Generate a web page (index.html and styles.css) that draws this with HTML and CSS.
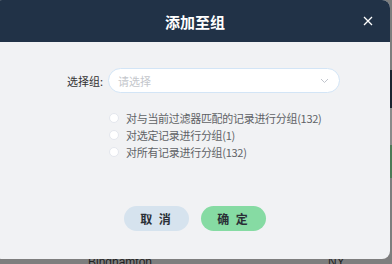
FILE: index.html
```html
<!DOCTYPE html>
<html>
<head>
<meta charset="utf-8">
<link rel="stylesheet" href="styles.css">
</head>
<body>
<div class="page">
  <div class="band band-top"></div>
  <div class="band band-dark"></div>
  <div class="band band-mid"></div>
  <div class="band band-green"></div>
  <div class="band band-rest"></div>
  <div class="row-text"><span class="city">Binghamton</span><span class="state">NY</span></div>
</div>
<div class="dialog">
  <div class="dialog-header">
    <span class="title">添加至组</span>
    <svg class="close" width="10" height="10" viewBox="0 0 10 10"><path d="M1 1L9 9M9 1L1 9" stroke="#fff" stroke-width="1.3" fill="none"/></svg>
  </div>
  <div class="dialog-body">
    <div class="field">
      <span class="label">选择组:</span>
      <div class="select">
        <span class="placeholder">请选择</span>
        <svg class="chev" width="9" height="6" viewBox="0 0 9 6"><path d="M1 1L4.5 4.5L8 1" stroke="#c0c4cc" stroke-width="1" fill="none"/></svg>
      </div>
    </div>
    <div class="options">
      <label class="opt"><span class="radio"></span>对与当前过滤器匹配的记录进行分组(132)</label>
      <label class="opt"><span class="radio"></span>对选定记录进行分组(1)</label>
      <label class="opt"><span class="radio"></span>对所有记录进行分组(132)</label>
    </div>
    <div class="actions">
      <button class="btn btn-cancel">取 消</button>
      <button class="btn btn-ok">确 定</button>
    </div>
  </div>
</div>
</body>
</html>
```
FILE: styles.css
```css
html, body {
  margin: 0;
  padding: 0;
  width: 392px;
  height: 264px;
  overflow: hidden;
  background: #7e7e7e;
  font-family: "Noto Sans CJK SC", "Noto Sans", sans-serif;
}
.page {
  display: flex;
  flex-direction: column;
  height: 264px;
}
.band { flex: none; }
.band-top { height: 70px; background: #7e7e7e; }
.band-dark { height: 38px; background: #1c2330; }
.band-mid { height: 37px; background: #8a8a8a; }
.band-green { height: 33px; background: #4d7a57; }
.band-rest { height: 77px; background: #7e7e7e; }
.row-text {
  height: 9px;
  display: flex;
  font-family: "Liberation Sans", sans-serif;
  font-size: 12px;
  line-height: 14px;
  color: #222;
}
.city { margin-left: 88px; }
.state { margin-left: 176px; }
.dialog {
  position: absolute;
  left: -6px;
  top: 0;
  width: 396px;
  height: 259px;
  border-radius: 8px;
  background: #f1f2f4;
  overflow: hidden;
  display: flex;
  flex-direction: column;
}
.dialog-header {
  height: 42px;
  background: #213247;
  display: flex;
  align-items: center;
  justify-content: center;
  position: relative;
  padding-left: 6px;
}
.title {
  color: #fff;
  font-size: 15px;
  font-weight: bold;
}
.close {
  position: absolute;
  right: 17px;
  top: 16px;
}
.dialog-body {
  display: flex;
  flex-direction: column;
  padding-top: 26px;
}
.field {
  display: flex;
  align-items: center;
  height: 25px;
}
.label {
  width: 109px;
  text-align: right;
  font-size: 11px;
  color: #333;
  margin-right: 5px;
}
.select {
  width: 230px;
  height: 23px;
  border: 1px solid #d3e5f6;
  border-radius: 13px;
  background: #fff;
  display: flex;
  align-items: center;
  justify-content: space-between;
  padding: 0 10px 0 9px;
  box-sizing: border-box;
  width: 232px;
  height: 25px;
}
.placeholder {
  font-size: 11px;
  color: #c4c7cc;
}
.options {
  display: flex;
  flex-direction: column;
  margin-top: 16px;
  margin-left: 115px;
  gap: 0;
}
.opt {
  display: flex;
  align-items: center;
  height: 17px;
  font-size: 11px;
  color: #606266;
  letter-spacing: -0.3px;
}
.radio {
  width: 10px;
  height: 10px;
  border-radius: 50%;
  border: 1px solid #e4e7ed;
  background: #fff;
  margin-right: 7px;
  box-sizing: border-box;
}
.actions {
  display: flex;
  gap: 12px;
  margin-top: 46px;
  margin-left: 130px;
}
.btn {
  width: 65px;
  height: 25px;
  border: none;
  border-radius: 13px;
  font-family: "Noto Sans CJK SC", sans-serif;
  font-size: 12px;
  font-weight: bold;
  color: #2a2f36;
  letter-spacing: 2px;
  padding: 0;
}
.btn-cancel { background: #d6e3ee; }
.btn-ok { background: #86dba3; }
```
